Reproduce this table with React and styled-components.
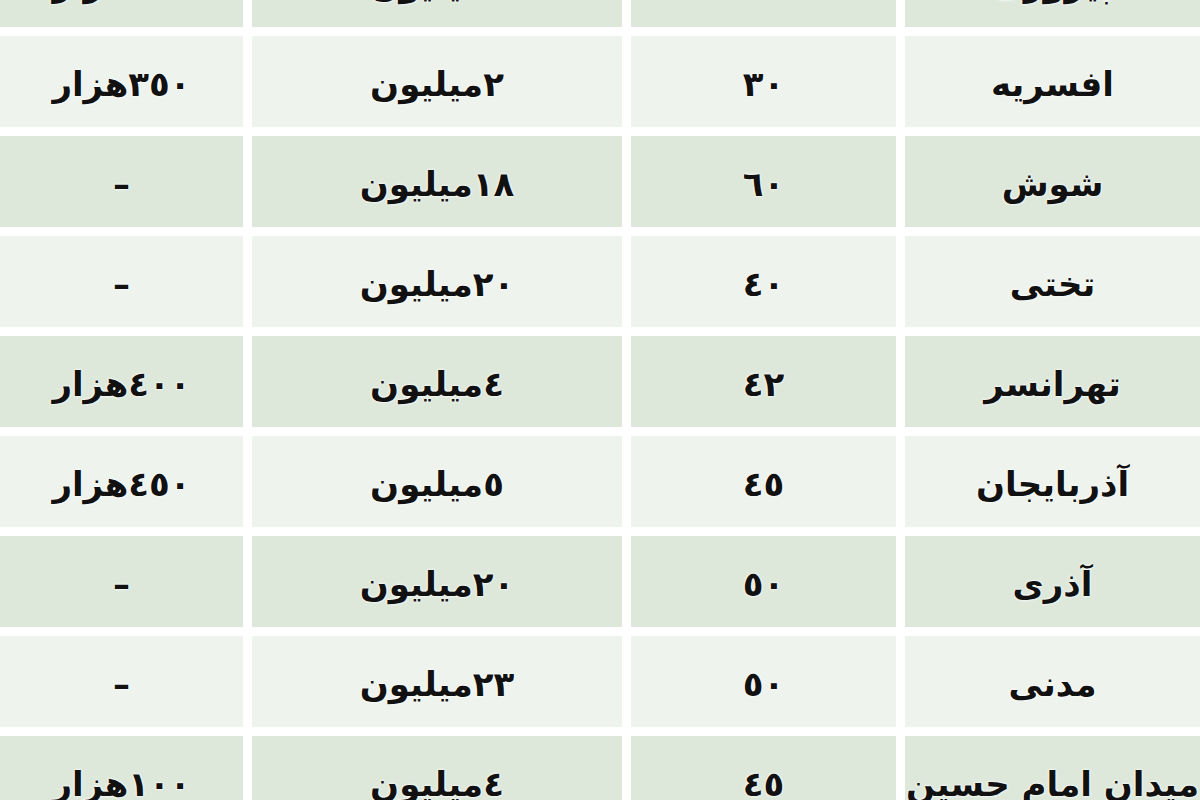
import styled, { createGlobalStyle } from 'styled-components';

const GlobalStyle = createGlobalStyle`
  html, body {
    margin: 0;
    padding: 0;
    background: #ffffff;
    overflow: hidden;
  }
`;

const Viewport = styled.div`
  width: 1200px;
  height: 800px;
  overflow: hidden;
  background: #ffffff;
`;

const Table = styled.div`
  display: flex;
  flex-direction: column;
  gap: 9px;
  margin-top: -64px;
  direction: rtl;
`;

const Row = styled.div`
  display: grid;
  grid-template-columns: 295px 265px 370px 243px;
  column-gap: 9px;
  height: 91px;
`;

const Cell = styled.div`
  display: flex;
  align-items: center;
  justify-content: center;
  white-space: nowrap;
  background: ${(props) => (props.$dark ? '#dde8db' : '#eef3ed')};
  font-family: 'DejaVu Sans', sans-serif;
  font-weight: 700;
  font-size: 34px;
  color: #111;
  text-shadow: 0 0 3px #fff, 0 0 2px #fff;
  padding-top: 5px;
  box-sizing: border-box;
`;

const rows = [
  ['پیروزی', '٣٥', '٣میلیون', '٣٠٠هزار'],
  ['افسریه', '٣٠', '٢میلیون', '٣٥٠هزار'],
  ['شوش', '٦٠', '١٨میلیون', '–'],
  ['تختی', '٤٠', '٢٠میلیون', '–'],
  ['تهرانسر', '٤٢', '٤میلیون', '٤٠٠هزار'],
  ['آذربایجان', '٤٥', '٥میلیون', '٤٥٠هزار'],
  ['آذری', '٥٠', '٢٠میلیون', '–'],
  ['مدنی', '٥٠', '٢٣میلیون', '–'],
  ['میدان امام حسین', '٤٥', '٤میلیون', '١٠٠هزار'],
];

export default function App() {
  return (
    <Viewport>
      <GlobalStyle />
      <Table>
        {rows.map((row, i) => (
          <Row key={i}>
            {row.map((value, j) => (
              <Cell key={j} $dark={i % 2 === 0}>
                {value}
              </Cell>
            ))}
          </Row>
        ))}
      </Table>
    </Viewport>
  );
}
